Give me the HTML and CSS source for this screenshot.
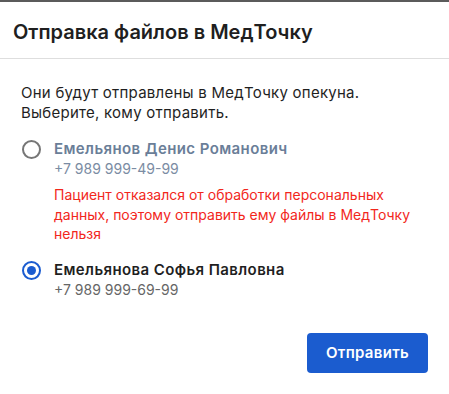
FILE: index.html
```html
<!DOCTYPE html>
<html lang="ru">
<head>
    <meta charset="UTF-8">
    <meta name="viewport" content="width=device-width, initial-scale=1.0">
    <title>Отправка файлов в МедТочку</title>
    <link rel="stylesheet" href="styles.css">
</head>
<body>
    <div class="backdrop-edge"></div>

    <div class="modal">
        <div class="modal-header">
            <h2>Отправка файлов в МедТочку</h2>
        </div>

        <div class="modal-body">
            <p class="intro">Они будут отправлены в МедТочку опекуна.<br>Выберите, кому отправить.</p>

            <div class="recipient disabled">
                <span class="radio"></span>
                <div class="recipient-info">
                    <div class="recipient-name">Емельянов Денис Романович</div>
                    <div class="recipient-phone">+7 989 999-49-99</div>
                    <div class="recipient-error">Пациент отказался от обработки персональных данных, поэтому отправить ему файлы в МедТочку нельзя</div>
                </div>
            </div>

            <div class="recipient">
                <span class="radio checked"></span>
                <div class="recipient-info">
                    <div class="recipient-name">Емельянова Софья Павловна</div>
                    <div class="recipient-phone">+7 989 999-69-99</div>
                </div>
            </div>
        </div>

        <div class="modal-footer">
            <button class="send-btn">Отправить</button>
        </div>
    </div>
</body>
</html>
```

FILE: styles.css
```css
body {
    font-family: Inter, "Noto Sans", sans-serif;
    margin: 0;
    background-color: #fff;
    color: #1f1f1f;
}

.backdrop-edge {
    height: 2px;
    background-color: #5b5b5b;
}

.modal-header {
    padding: 18px 13px 14px;
    border-bottom: 1px solid #dedede;
}

.modal-header h2 {
    margin: 0;
    font-size: 20px;
    line-height: 24px;
    font-weight: 600;
    color: #1f1f1f;
}

.modal-body {
    padding: 24px 21px 0;
}

.intro {
    margin: 0 0 16px;
    font-size: 15px;
    line-height: 20px;
    letter-spacing: 0.25px;
}

.recipient {
    display: flex;
    align-items: flex-start;
    gap: 13px;
    margin-bottom: 16px;
}

.radio {
    flex: none;
    box-sizing: border-box;
    width: 19px;
    height: 19px;
    margin: 1px 0 0 1px;
    border: 2px solid #767676;
    border-radius: 50%;
    display: flex;
    align-items: center;
    justify-content: center;
}

.radio.checked {
    border-color: #1b5cd0;
}

.radio.checked::after {
    content: "";
    width: 9px;
    height: 9px;
    border-radius: 50%;
    background-color: #1b5cd0;
}

.recipient-name {
    font-size: 15px;
    line-height: 20px;
    font-weight: 600;
    letter-spacing: 0.4px;
}

.disabled .recipient-name {
    color: #6a7e98;
}

.recipient-phone {
    font-size: 14px;
    line-height: 20px;
    color: #666;
}

.disabled .recipient-phone {
    color: #7b8ca3;
}

.recipient-error {
    margin-top: 6px;
    font-size: 14px;
    line-height: 19.5px;
    color: #f2271c;
}

.modal-footer {
    display: flex;
    justify-content: flex-end;
    padding: 17px 21px 21px;
}

.send-btn {
    width: 121px;
    height: 40px;
    font-family: inherit;
    font-size: 15px;
    font-weight: 600;
    letter-spacing: 0.3px;
    background-color: #1b5ccf;
    color: #fff;
    border: none;
    border-radius: 4px;
    cursor: pointer;
}

.send-btn:hover {
    background-color: #164cad;
}
```
